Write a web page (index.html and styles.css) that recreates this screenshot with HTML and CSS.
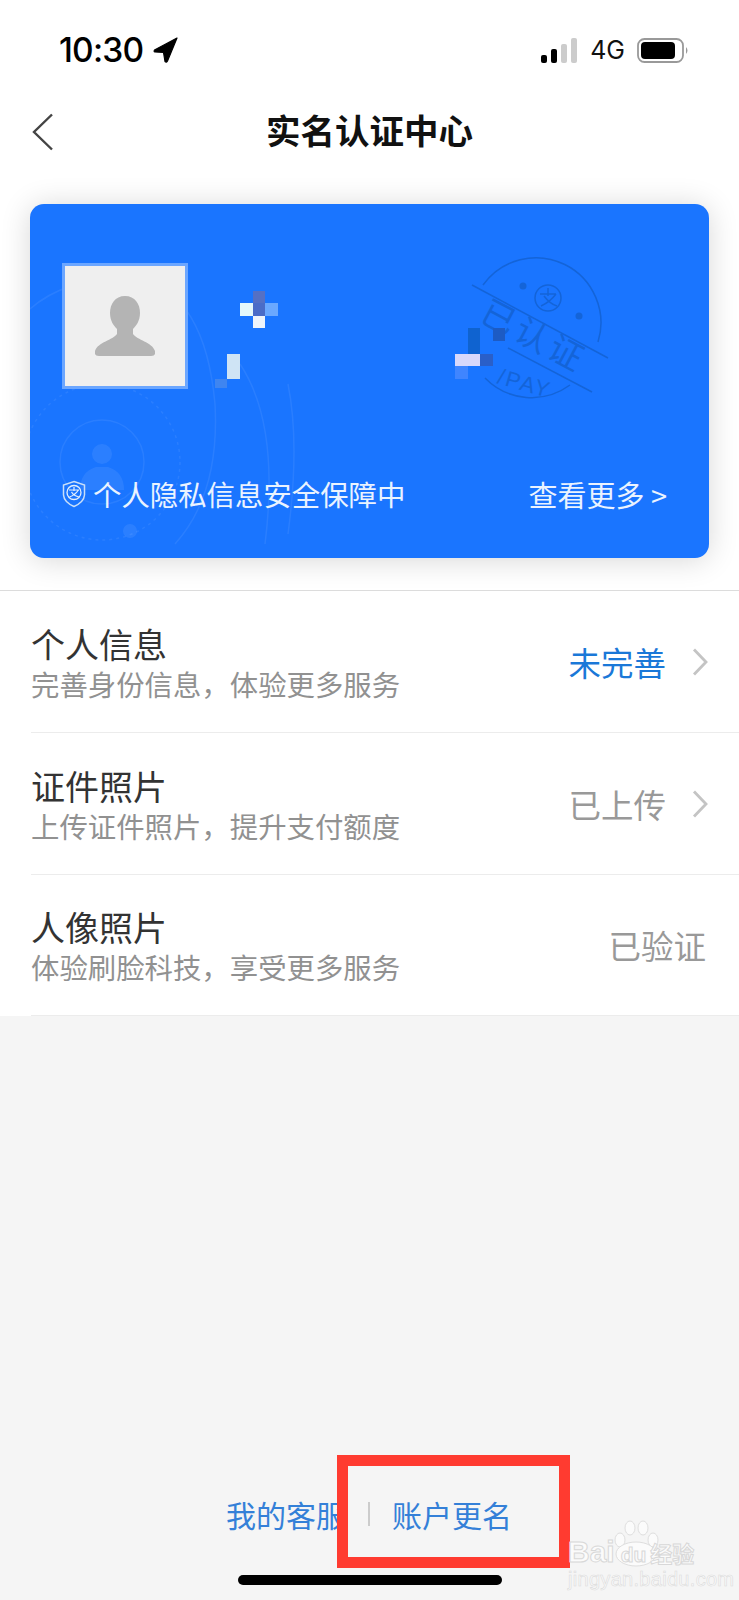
FILE: index.html
```html
<!DOCTYPE html>
<html lang="zh-CN">
<head>
<meta charset="UTF-8">
<title>实名认证中心</title>
<link rel="stylesheet" href="styles.css">
</head>
<body>
<div class="page">
	<div class="top">
		<div class="statusBar">
			<div class="timeBox">
				<span class="time">10:30</span>
				<svg class="locArrow" width="25" height="26" viewBox="0 0 25 26"><path d="M24 1 L1.500 13 Q0.500 14.500 2 15 L10.500 15.500 L12 24.500 Q13.500 26 14.500 24 Z" fill="#000" stroke="#000" stroke-width="1.200" stroke-linejoin="round"/></svg>
			</div>
			<div class="statusRight">
				<svg width="37" height="25" viewBox="0 0 37 25">
					<rect x="0" y="17" width="6" height="8" rx="2" fill="#000"/>
					<rect x="10" y="11" width="6" height="14" rx="2" fill="#000"/>
					<rect x="20" y="6" width="6" height="19" rx="2" fill="#ccc"/>
					<rect x="30" y="0" width="6" height="25" rx="2" fill="#ccc"/>
				</svg>
				<span class="net">4G</span>
				<svg width="53" height="25" viewBox="0 0 53 25">
					<rect x="1" y="1" width="45" height="23" rx="6.500" fill="none" stroke="#999" stroke-width="1.800"/>
					<rect x="4" y="4" width="34" height="17" rx="4" fill="#000"/>
					<path d="M49 9 Q52 12.500 49 16 Z" fill="#999"/>
				</svg>
			</div>
		</div>
		<div class="navBar">
			<svg class="backIcon" width="22" height="38" viewBox="0 0 22 38"><path d="M20 1.500 L2 19 L20 36.500" fill="none" stroke="#444" stroke-width="2.400"/></svg>
			<h1 class="navTitle">实名认证中心</h1>
		</div>
		<div class="card">
			<svg class="cardDecor" width="679" height="354" viewBox="0 0 679 354">
				<g fill="none" stroke="#fff" stroke-opacity=".07" stroke-width="1.500">
					<circle cx="72" cy="258" r="42"/>
					<circle cx="72" cy="258" r="78" stroke-dasharray="3 4"/>
					<path d="M0 105 Q40 70 110 75 Q175 90 185 200 Q190 290 145 340"/>
					<path d="M210 160 Q250 220 235 340"/>
					<path d="M258 180 Q270 240 258 330"/>
				</g>
				<g fill="#fff" fill-opacity=".08">
					<circle cx="72" cy="250" r="10"/>
					<path d="M50 286 Q50 268 66 263 L78 263 Q94 268 94 286 Z"/>
					<circle cx="100" cy="130" r="6"/>
					<circle cx="100" cy="327" r="7"/>
				</g>
				<g fill="none" stroke="#1464d8" stroke-width="1.500">
					<path d="M453 81 A65 65 0 0 1 568 138"/>
					<path d="M455 174 A65 65 0 0 0 540 181"/>
					<path d="M442 81 L578 154"/>
					<path d="M478 144 L562 188"/>
					<circle cx="518" cy="94" r="13"/>
					<path d="M510 90 H526 M518 84 V92 M511 102 Q520 98 526 90 M514 92 Q520 100 527 102"/>
				</g>
				<g fill="#1464d8">
					<circle cx="493" cy="82" r="3.500"/>
					<circle cx="549" cy="112" r="3.500"/>
					<text class="stampText" x="503" y="144" transform="rotate(28 503 134)">已认证</text>
					<text class="stampPay" x="495" y="187" transform="rotate(16 495 178)">/PAY</text>
				</g>
				<g>
					<rect x="210" y="99" width="13" height="13" fill="#e4f8fb"/>
					<rect x="223" y="87" width="12" height="12" fill="#5570c4"/>
					<rect x="223" y="99" width="12" height="13" fill="#4a6cc8"/>
					<rect x="235" y="99" width="13" height="13" fill="#6aa8ff"/>
					<rect x="223" y="112" width="12" height="12" fill="#eef4fb"/>
					<rect x="197" y="150" width="13" height="25" fill="#cfe4f5"/>
					<rect x="185" y="175" width="12" height="9" fill="#3f85f0"/>
					<rect x="425" y="150" width="25" height="12" fill="#d8d8fb"/>
					<rect x="438" y="124" width="12" height="26" fill="#0f63d0"/>
					<rect x="450" y="150" width="13" height="12" fill="#2a5fc8"/>
					<rect x="463" y="124" width="12" height="13" fill="#1d5bc4"/>
					<rect x="425" y="162" width="13" height="13" fill="#3f85ff"/>
				</g>
			</svg>
			<div class="avatar">
				<svg width="60" height="60" viewBox="0 0 60 60"><path d="M30 0 C20 0 15 8 15 17 C15 25 19 30 22 33 L22 38 C18 44 3 46 0 55 Q-1 60 4 60 L56 60 Q61 60 60 55 C57 46 42 44 38 38 L38 33 C41 30 45 25 45 17 C45 8 40 0 30 0 Z" fill="#b4b4b4"/></svg>
			</div>
			<div class="cardBottom">
				<div class="safeInfo">
					<svg width="24" height="28" viewBox="0 0 24 28">
						<path d="M12 1.500 L22.500 5 V15 Q22 22 12 26.500 Q2 22 1.500 15 V5 Z" fill="none" stroke="#c8def8" stroke-width="1.500"/>
						<circle cx="12" cy="12.500" r="7" fill="none" stroke="#e4effc" stroke-width="1.300"/>
						<path d="M7 10 H17 M12 7 V11 M7.500 17 Q13 15 16.500 10 M9.500 12 Q12 16 17 17" fill="none" stroke="#e4effc" stroke-width="1.200"/>
					</svg>
					<span>个人隐私信息安全保障中</span>
				</div>
				<span class="moreLink">查看更多 &gt;</span>
			</div>
		</div>
	</div>
	<div class="list">
		<div class="row">
			<div class="rowText">
				<div class="rowTitle">个人信息</div>
				<div class="rowSub">完善身份信息，体验更多服务</div>
			</div>
			<span class="rowValue blue">未完善</span>
			<svg class="rowArrow" width="16" height="28" viewBox="0 0 16 28"><path d="M2 1.500 L14 14 L2 26.500" fill="none" stroke="#c4c4c4" stroke-width="2.800"/></svg>
		</div>
		<div class="row">
			<div class="rowText">
				<div class="rowTitle">证件照片</div>
				<div class="rowSub">上传证件照片，提升支付额度</div>
			</div>
			<span class="rowValue">已上传</span>
			<svg class="rowArrow" width="16" height="28" viewBox="0 0 16 28"><path d="M2 1.500 L14 14 L2 26.500" fill="none" stroke="#c4c4c4" stroke-width="2.800"/></svg>
		</div>
		<div class="row">
			<div class="rowText">
				<div class="rowTitle">人像照片</div>
				<div class="rowSub">体验刷脸科技，享受更多服务</div>
			</div>
			<span class="rowValue">已验证</span>
		</div>
	</div>
	<div class="footer">
		<div class="footLinks">
			<a class="footLink">我的客服</a>
			<i class="footSep"></i>
			<a class="footLink">账户更名</a>
		</div>
		<div class="homeBar"></div>
	</div>
	<div class="redBox"></div>
	<div class="watermark">
		<svg class="paw" width="46" height="48" viewBox="0 0 46 48" fill="#fbfbfb" stroke="#dedede" stroke-width="1">
			<ellipse cx="6" cy="20" rx="5" ry="7"/>
			<ellipse cx="16" cy="8" rx="5" ry="7"/>
			<ellipse cx="29" cy="8" rx="5" ry="7"/>
			<ellipse cx="39" cy="20" rx="5" ry="7"/>
			<ellipse cx="22" cy="34" rx="20" ry="12"/>
		</svg>
		<div class="wmLogo"><span class="wmBai">Bai</span><span class="wmDu">du</span><span class="wmCn">经验</span></div>
		<div class="wmUrl">jingyan.baidu.com</div>
	</div>
</div>
</body>
</html>
```

FILE: styles.css
```css
*{
	box-sizing: border-box;
}
body{
	margin:0;
	font-family: "Noto Sans CJK SC","Liberation Sans",sans-serif;
	background: #f5f5f5;
}
.page{
	position: relative;
	width:739px;
	height:1600px;
	display: flex;
	flex-direction: column;
	overflow: hidden;
	background: #f5f5f5;
}
.top{
	height:590px;
	padding-top:37px;
	background: #fff;
}
.statusBar{
	display: flex;
	justify-content: space-between;
	height:26px;
	padding:0 49px 0 59px;
}
.timeBox{
	display: flex;
	align-items: center;
	gap:10px;
}
.time{
	font-family: Inter,"Liberation Sans",sans-serif;
	font-size:33.500px;
	font-weight:500;
	line-height:26px;
	letter-spacing:-0.8px;
	color:#000;
}
.statusRight{
	display: flex;
	align-items: center;
	gap:12px;
}
.net{
	font-family: Inter,"Liberation Sans",sans-serif;
	font-size:25px;
	line-height:26px;
	color:#111;
}
.navBar{
	position: relative;
	display: flex;
	justify-content: center;
	align-items: center;
	height:50px;
	margin-top:42px;
}
.backIcon{
	position: absolute;
	left:32px;
	top:8px;
}
.navTitle{
	margin:-3px 0 0;
	font-size:34.500px;
	font-weight:700;
	line-height:50px;
	color:#111;
}
.card{
	position: relative;
	display: flex;
	flex-direction: column;
	justify-content: space-between;
	width:679px;
	height:354px;
	margin:49px 0 0 30px;
	padding:59px 42px 44px 32px;
	border-radius:14px;
	background: #1a75ff;
	box-shadow: 0 2px 30px rgba(0,0,0,.16);
}
.cardDecor{
	position: absolute;
	left:0;
	top:0;
}
.avatar{
	position: relative;
	display: flex;
	justify-content: center;
	align-items: center;
	width:126px;
	height:126px;
	border:3px solid #6ba6ff;
	background: #efefef;
}
.cardBottom{
	position: relative;
	display: flex;
	justify-content: space-between;
	align-items: center;
	font-size:28.400px;
	line-height:40px;
	color:#eaf3ff;
}
.safeInfo{
	display: flex;
	align-items: center;
	gap:7px;
}
.moreLink{
	font-size:29px;
}
.list{
	height:426px;
	padding-left:31px;
	border-top:1px solid #dcdcdc;
	background: #fff;
}
.row{
	display: flex;
	align-items: center;
	height:142px;
	padding-right:31px;
	border-bottom:1px solid #ececec;
}
.row:last-child{
	height:141px;
	padding-right:33px;
}
.rowText{
	flex:1;
}
.rowTitle{
	font-size:34px;
	line-height:44px;
	color:#333;
}
.rowSub{
	font-size:28.400px;
	line-height:36px;
	color:#919191;
}
.rowValue{
	font-size:32.500px;
	line-height:44px;
	color:#999;
}
.rowValue.blue{
	color:#1a78d8;
}
.rowArrow{
	margin-left:26px;
}
.footer{
	display: flex;
	flex-direction: column;
	align-items: center;
	margin-top:auto;
	padding-bottom:15px;
}
.footLinks{
	display: flex;
	align-items: center;
	width:100%;
	height:44px;
	padding-left:226px;
}
.footLink{
	font-size:30px;
	line-height:44px;
	color:#3480d8;
}
.footSep{
	width:2px;
	height:24px;
	margin:0 22px;
	background: #ccc;
}
.homeBar{
	width:264px;
	height:10px;
	margin-top:39px;
	margin-right:-1px;
	border-radius:5px;
	background: #000;
}
.redBox{
	position: absolute;
	left:337px;
	top:1455px;
	width:233px;
	height:113px;
	border:11px solid #ff3b30;
}
.watermark{
	position: absolute;
	left:568px;
	top:1520px;
	width:140px;
	height:66px;
	color:#fbfbfb;
}
.paw{
	position: absolute;
	left:46px;
	top:0;
}
.wmLogo{
	position: absolute;
	left:0;
	top:12px;
	display: flex;
	align-items: baseline;
	font-family: "Liberation Sans",sans-serif;
	font-weight:700;
	font-size:30px;
	line-height:40px;
	-webkit-text-stroke:1px #d8d8d8;
}
.wmDu{
	margin-left:6px;
	font-size:21px;
}
.wmCn{
	margin-left:4px;
	font-family: "Noto Sans CJK SC",sans-serif;
	font-size:22px;
}
.wmUrl{
	position: absolute;
	left:0;
	top:50px;
	font-family: "Liberation Sans",sans-serif;
	font-size:20px;
	line-height:18px;
	letter-spacing:.3px;
	color:#fafafa;
	-webkit-text-stroke:.6px #dcdcdc;
}
.stampText{
	font-size:34px;
	letter-spacing:4px;
	text-anchor: middle;
}
.stampPay{
	font-family: "Liberation Sans",sans-serif;
	font-size:22px;
	letter-spacing:2px;
	text-anchor: middle;
}
```
